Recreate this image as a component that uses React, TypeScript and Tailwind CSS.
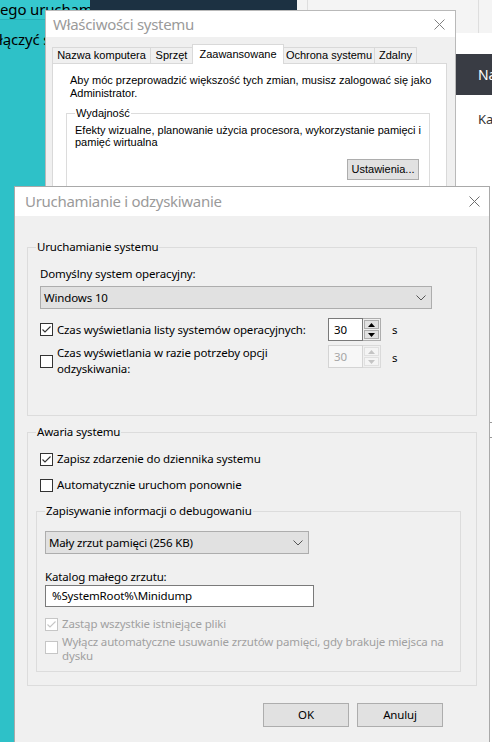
import React from "react";

type CheckProps = {
    checked?: boolean
    disabled?: boolean
}

const Check: React.FC<CheckProps> = ({ checked, disabled }) => (
    <span
        className={`inline-flex h-[13px] w-[13px] shrink-0 items-center justify-center border bg-white ${disabled ? "border-[#c6c6c6]" : "border-[#333333]"}`}
    >
        {checked && (
            <svg width="11" height="11" viewBox="0 0 11 11">
                <path d="M1.5 5.5 L4 8 L9.5 2.5" fill="none" stroke={disabled ? "#c6c6c6" : "#333333"} strokeWidth="1.1" />
            </svg>
        )}
    </span>
);

const Chevron = () => (
    <svg width="10" height="6" viewBox="0 0 10 6">
        <path d="M0.5 0.5 L5 5 L9.5 0.5" fill="none" stroke="#555555" strokeWidth="1" />
    </svg>
);

const CloseX = ({ color }: { color: string }) => (
    <svg width="11" height="11" viewBox="0 0 11 11">
        <path d="M0.5 0.5 L10.5 10.5 M10.5 0.5 L0.5 10.5" stroke={color} strokeWidth="1" />
    </svg>
);

const Arrow = ({ up, color }: { up?: boolean; color: string }) => (
    <svg width="7" height="4" viewBox="0 0 7 4">
        <path d={up ? "M0 4 L3.5 0 L7 4 Z" : "M0 0 L3.5 4 L7 0 Z"} fill={color} />
    </svg>
);

const Spinner = ({ disabled }: { disabled?: boolean }) => (
    <div className="flex h-[23px] w-[53px] shrink-0">
        <div
            className={`flex w-[35px] items-center pl-[5px] ${disabled ? "border border-[#d4d4d4] bg-[#f7f7f7] text-[#a6a6a6]" : "border border-[#7a7a7a] bg-white text-black"}`}
        >
            30
        </div>
        <div className={`flex w-[18px] flex-col gap-[1px] border border-l-0 p-[1px] ${disabled ? "border-[#dadada]" : "border-[#adadad]"}`}>
            <div className={`flex flex-1 items-center justify-center border ${disabled ? "border-[#e0e0e0] bg-[#f4f4f4]" : "border-[#adadad] bg-[#e1e1e1]"}`}>
                <Arrow up color={disabled ? "#c4c4c4" : "#000000"} />
            </div>
            <div className={`flex flex-1 items-center justify-center border ${disabled ? "border-[#e0e0e0] bg-[#f4f4f4]" : "border-[#adadad] bg-[#e1e1e1]"}`}>
                <Arrow color={disabled ? "#c4c4c4" : "#000000"} />
            </div>
        </div>
    </div>
);

const App: React.FC = () => {
    return (
        <div className="relative h-[742px] w-[492px] overflow-hidden whitespace-nowrap bg-[#2ec1c8] font-['Noto_Sans',sans-serif] text-[11.5px] tracking-[-0.15px] text-black">
            {/* Desktop behind */}
            <div className="absolute left-0 top-0 flex h-[20px] w-[90px] items-center overflow-hidden border-b border-[#27b1b8] bg-[#36c8ce] text-[15px]">
                ego uruchamiania
            </div>
            <div className="absolute left-[-1px] top-[31px] text-[15px] leading-[16px]">łączyć system</div>
            <div className="absolute left-[90px] top-0 h-[12px] w-[207px] bg-[#1c3142]" />
            <div className="absolute left-[297px] top-0 h-[33px] w-[195px] bg-[#f4f4f4]">
                <div className="absolute left-[10px] top-0 h-full border-l border-[#dedede]" />
                <div className="absolute left-[181px] top-0 h-full border-l border-[#dedede]" />
            </div>
            <div className="absolute left-[455px] top-[33px] flex h-[200px] w-[37px] flex-col bg-white">
                <div className="mt-[21px] flex h-[41px] items-center bg-[#393c44] pl-[23px] text-[14px] text-white">Na</div>
                <div className="mt-[15px] pl-[23px] text-[13px] text-[#333333]">Ka</div>
            </div>
            <div className="absolute left-[489px] top-[230px] flex h-[512px] w-[3px] flex-col bg-white">
                <div className="mt-[192px] h-[1px] bg-[#999999]" />
                <div className="mt-[14px] h-[1px] bg-[#999999]" />
            </div>

            {/* Właściwości systemu */}
            <div className="absolute left-[45px] top-[10px] h-[200px] w-[411px] border border-[#b9b9b9] bg-[#f0f0f0] font-['Liberation_Sans',Arial,sans-serif] text-[11px] tracking-normal">
                <div className="flex h-[26px] items-center justify-between bg-white pl-[7px] pr-[10px] font-['Noto_Sans',sans-serif]">
                    <span className="text-[15px] tracking-[-0.3px] text-[#9a9a9a]">Właściwości systemu</span>
                    <CloseX color="#808080" />
                </div>
                <div className="flex h-[26px] items-end pl-[6px] pt-[7px]">
                    <div className="flex h-[16px] w-[99px] items-center justify-center border border-b-0 border-[#d9d9d9]">Nazwa komputera</div>
                    <div className="-ml-[1px] flex h-[16px] w-[43px] items-center justify-center border border-b-0 border-[#d9d9d9]">Sprzęt</div>
                    <div className="relative z-10 -mb-[1px] -ml-[1px] flex h-[20px] w-[92px] items-center justify-center border border-b-0 border-[#d9d9d9] bg-white">Zaawansowane</div>
                    <div className="-ml-[1px] flex h-[16px] w-[92px] items-center justify-center border border-b-0 border-[#d9d9d9]">Ochrona systemu</div>
                    <div className="-ml-[1px] flex h-[16px] w-[43px] items-center justify-center border border-b-0 border-[#d9d9d9]">Zdalny</div>
                </div>
                <div className="ml-[6px] h-[140px] w-[395px] border border-[#d9d9d9] bg-white pt-[10px]">
                    <p className="pl-[17px] leading-[13px]">
                        Aby móc przeprowadzić większość tych zmian, musisz zalogować się jako
                        <br />
                        Administrator.
                    </p>
                    <fieldset className="ml-[13px] mt-[6px] w-[364px] border border-[#dcdcdc] px-[8px] pb-[8px]">
                        <legend className="ml-[0px] px-[1px] leading-[14px]">Wydajność</legend>
                        <p className="mt-[4px] leading-[12px]">
                            Efekty wizualne, planowanie użycia procesora, wykorzystanie pamięci i
                            <br />
                            pamięć wirtualna
                        </p>
                        <div className="mt-[11px] flex justify-end pr-[2px]">
                            <button type="button" className="h-[21px] w-[72px] border border-[#adadad] bg-[#e1e1e1]">
                                Ustawienia...
                            </button>
                        </div>
                    </fieldset>
                </div>
            </div>

            {/* Uruchamianie i odzyskiwanie */}
            <div className="absolute left-[14px] top-[186px] flex h-[570px] w-[476px] flex-col border border-[#a9a9a9] bg-[#f0f0f0]">
                <div className="flex h-[29px] shrink-0 items-center justify-between bg-white pl-[10px] pr-[9px]">
                    <span className="text-[15px] tracking-[-0.3px] text-[#9a9a9a]">Uruchamianie i odzyskiwanie</span>
                    <CloseX color="#6e6e6e" />
                </div>

                <div className="px-[12px]">
                    {/* Uruchamianie systemu */}
                    <fieldset className="mt-[23px] border border-[#dcdcdc] px-[12px] pb-[38px]">
                        <legend className="ml-[-4px] px-[1px] leading-[16px]">Uruchamianie systemu</legend>
                        <div className="mt-[11px] leading-[15px]">Domyślny system operacyjny:</div>
                        <div className="mt-[5px] flex h-[23px] w-[392px] items-center justify-between border border-[#adadad] bg-[#e1e1e1] pl-[3px] pr-[5px]">
                            <span>Windows 10</span>
                            <Chevron />
                        </div>
                        <div className="mt-[9px] flex h-[23px] items-center">
                            <Check checked />
                            <span className="ml-[4px] w-[271px]">Czas wyświetlania listy systemów operacyjnych:</span>
                            <Spinner />
                            <span className="ml-[11px]">s</span>
                        </div>
                        <div className="mt-[4px] flex items-start">
                            <span className="mt-[10px]">
                                <Check />
                            </span>
                            <span className="ml-[4px] w-[271px] leading-[16px]">
                                Czas wyświetlania w razie potrzeby opcji
                                <br />
                                odzyskiwania:
                            </span>
                            <Spinner disabled />
                            <span className="ml-[11px] mt-[4px]">s</span>
                        </div>
                    </fieldset>

                    {/* Awaria systemu */}
                    <fieldset className="mt-[8px] border border-[#dcdcdc] px-[8px] pb-[13px]">
                        <legend className="ml-[0px] px-[1px] leading-[16px]">Awaria systemu</legend>
                        <div className="ml-[4px] mt-[11px] flex h-[16px] items-center">
                            <Check checked />
                            <span className="ml-[4px]">Zapisz zdarzenie do dziennika systemu</span>
                        </div>
                        <div className="ml-[4px] mt-[10px] flex h-[16px] items-center">
                            <Check />
                            <span className="ml-[4px]">Automatycznie uruchom ponownie</span>
                        </div>

                        <fieldset className="mt-[10px] w-[425px] border border-[#dcdcdc] px-[8px] pb-[8px]">
                            <legend className="ml-[0px] px-[1px] leading-[16px]">Zapisywanie informacji o debugowaniu</legend>
                            <div className="mt-[12px] flex h-[23px] w-[264px] items-center justify-between border border-[#adadad] bg-[#e1e1e1] pl-[3px] pr-[5px]">
                                <span>Mały zrzut pamięci (256 KB)</span>
                                <Chevron />
                            </div>
                            <div className="mt-[15px] leading-[15px]">Katalog małego zrzutu:</div>
                            <div className="mt-[1px] flex h-[22px] w-[269px] items-center border border-[#7a7a7a] bg-white pl-[6px]">
                                %SystemRoot%\Minidump
                            </div>
                            <div className="mt-[9px] flex h-[16px] items-center text-[#a0a0a0]">
                                <Check checked disabled />
                                <span className="ml-[4px]">Zastąp wszystkie istniejące pliki</span>
                            </div>
                            <div className="mt-[3px] flex items-start text-[#a0a0a0]">
                                <span className="mt-[6px]">
                                    <Check disabled />
                                </span>
                                <span className="ml-[4px] leading-[14px]">
                                    Wyłącz automatyczne usuwanie zrzutów pamięci, gdy brakuje miejsca na
                                    <br />
                                    dysku
                                </span>
                            </div>
                        </fieldset>
                    </fieldset>

                    {/* Buttons */}
                    <div className="mt-[17px] flex justify-end gap-[8px] pr-[34px]">
                        <button type="button" className="h-[24px] w-[86px] border border-[#adadad] bg-[#e1e1e1]">
                            OK
                        </button>
                        <button type="button" className="h-[24px] w-[86px] border border-[#adadad] bg-[#e1e1e1]">
                            Anuluj
                        </button>
                    </div>
                </div>
            </div>
        </div>
    );
};

export default App;
